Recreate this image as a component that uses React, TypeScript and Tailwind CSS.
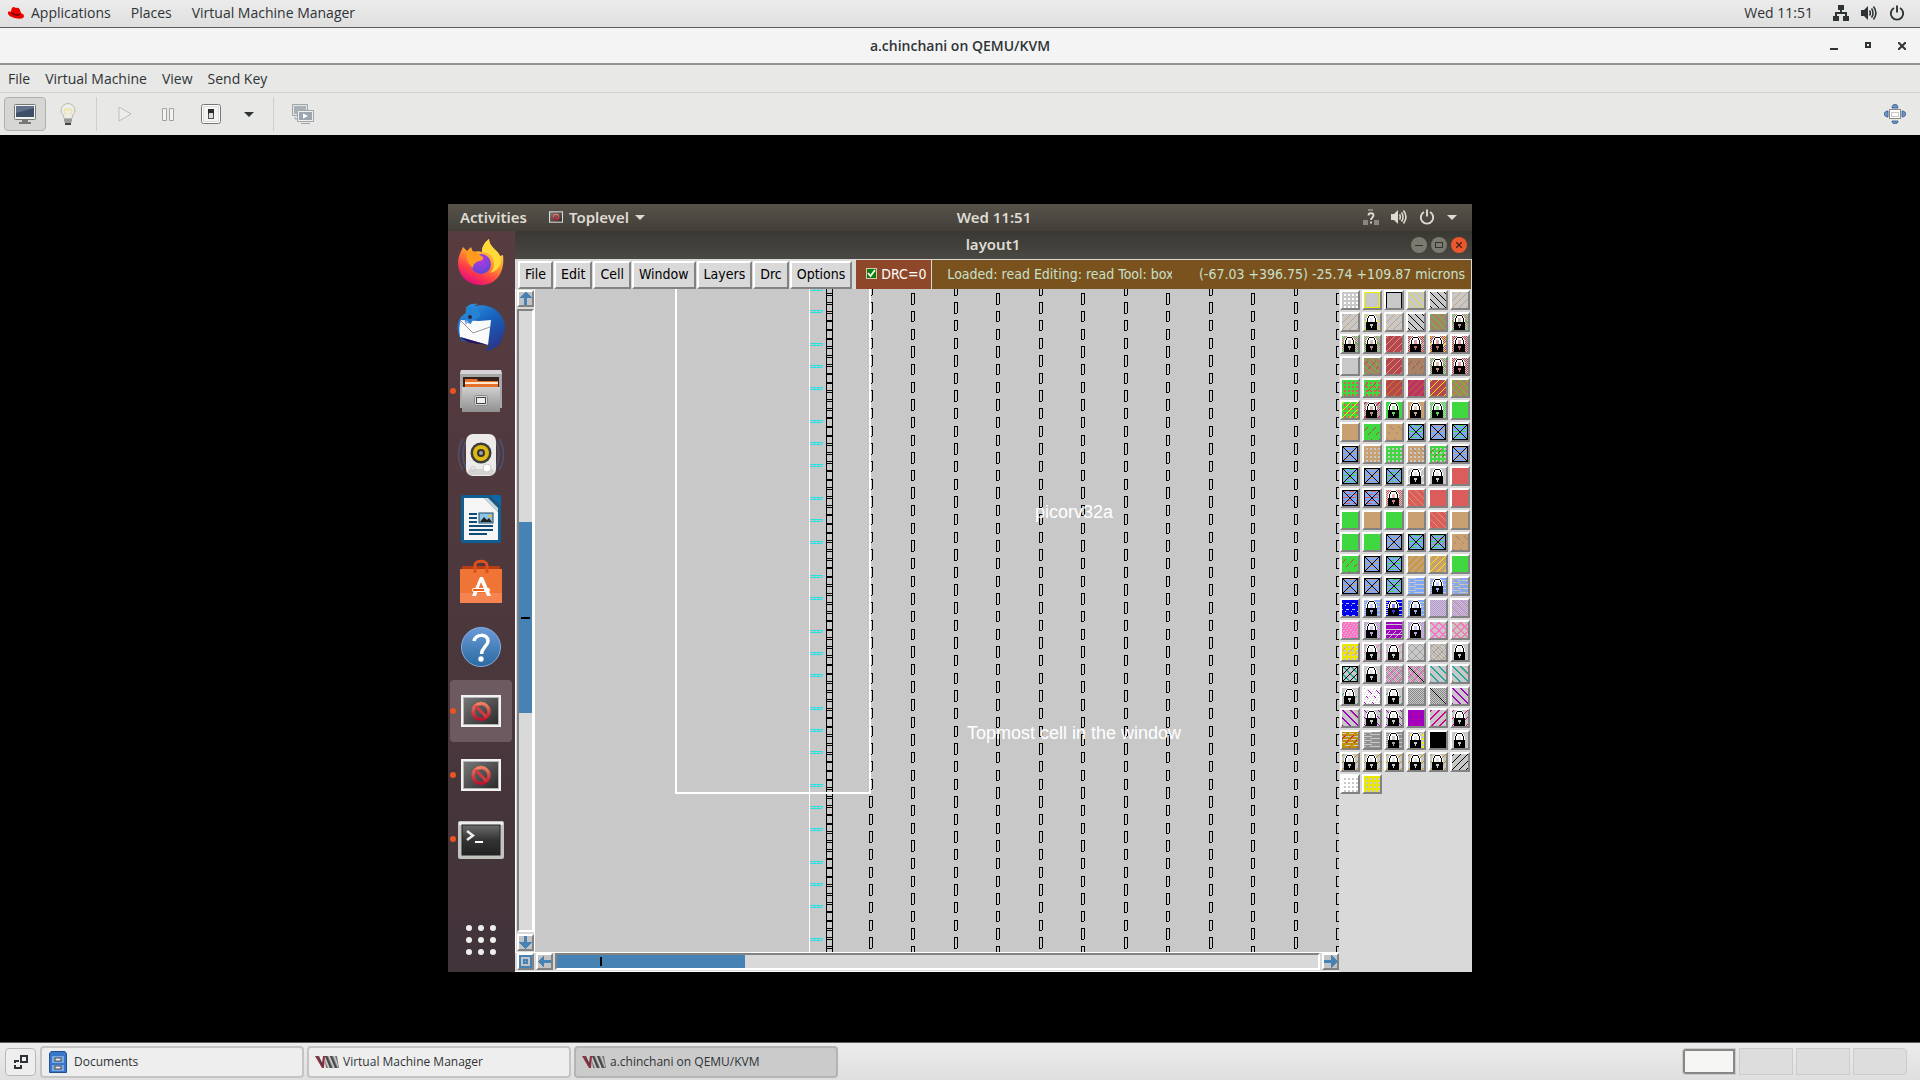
import React from "react";

const GRAY = "#c8c8c8";
const TAN = "#c8a072";
const GREEN = "#40d840";
const BROWN = "#a88264";
const RED = "#b84650";
const CORAL = "#dc5c5c";
const SKY = "#80a8f8";
const YEL = "#f0f000";
const PURPLE = "#a000c0";
const MAG = "#d00090";
const PINK = "#ff70c8";
const TEAL = "#20a8a0";
const GOLD = "#c09000";

type Test = (x: number, y: number) => boolean;

const tests: Record<string, Test> = {
  fill: () => true,
  slash: (x, y) => (x + y) % 7 === 1,
  back: (x, y) => (x - y + 21) % 7 === 0,
  slashSparse: (x, y) => (x + y) % 8 === 6 && (Math.floor(x / 4) + Math.floor(y / 8)) % 2 === 0,
  backSparse: (x, y) => (x - y + 16) % 8 === 2 && (Math.floor(x / 4) + Math.floor(y / 8)) % 2 === 1,
  thickBack: (x, y) => (x - y + 16) % 8 < 2,
  thickSlash: (x, y) => (x + y) % 8 < 2,
  dots: (x, y) => x % 4 > 1 && y % 4 > 1,
  check: (x, y) => (x + y) % 2 === 0,
  wave: (x, y) => (y + (x > 7 ? 2 : 0)) % 4 !== 0 && !(y % 4 === 2 && x % 6 < 2),
  bits: (x, y) => y % 3 === 1 && (x + y) % 8 < 5,
  purpleBits: (x, y) => y % 5 !== 2 && !(y > 8 && (x + y) % 6 === 0),
  triangles: (x, y) => !((x + 2) % 6 < 3 && y % 6 === 3) && !(x % 6 === 3 && y % 6 === 5),
  specks: (x, y) => (x * 5 + y * 3) % 16 < 3,
  magSpecks: (x, y) => x % 6 > 3 && y % 5 > 2,
  lattice: (x, y) => (x + y) % 8 < 2 || (x - y + 16) % 8 < 2,
  thin: (x, y) => (x + y) % 8 === 3 || (x - y + 16) % 8 === 4,
  open: (x, y) => x === 0 || x === 15 || y === 0,
  frame: (x, y) => x === 0 || x === 15 || y === 0 || y === 15,
  cross: (x, y) => x === 0 || x === 15 || y === 0 || y === 15 || x === y || x + y === 15,
  diagonal: (x, y) => x === y,
};

function pixels(test: Test) {
  let d = "";
  for (let y = 0; y < 16; y++) for (let x = 0; x < 16; x++) if (test(x, y)) d += `M${x} ${y}h1v1h-1z`;
  return d;
}

const paths: Record<string, string> = Object.fromEntries(Object.entries(tests).map(([k, t]) => [k, pixels(t)]));

type Layer = [string, string];
type Tile = { layers: Layer[]; lock?: boolean };

const t = (...layers: Layer[]): Tile => ({ layers });
const lock = (...layers: Layer[]): Tile => ({ layers, lock: true });
const solid = (c: string) => t(["fill", c]);
const box = (c: string, ...more: Layer[]) => t(["fill", SKY], ["bits", c], ...more, ["cross", "#000"]);

const tiles: Tile[] = [
  t(["dots", "#fff"]), t(["frame", YEL]), t(["open", "#000"]), t(["back", "#e0e020"]), t(["back", "#000"]), t(["slash", TAN]),
  t(["slash", TAN]), lock(["back", YEL]), t(["slash", TAN]), t(["back", "#000"]), t(["fill", BROWN], ["back", GREEN]), lock(["check", BROWN], ["back", GREEN]),
  lock(["check", BROWN], ["back", GREEN]), lock(["check", BROWN], ["back", GREEN]), t(["fill", RED], ["slash", TAN]), lock(["check", RED], ["slash", TAN]), lock(["check", RED], ["slash", YEL]), lock(["check", RED]),
  t(), t(["fill", BROWN], ["back", GREEN], ["slashSparse", RED]), t(["fill", RED], ["slash", TAN]), t(["fill", BROWN], ["slashSparse", RED]), lock(["check", BROWN], ["back", GREEN]), lock(["check", RED]),
  t(["fill", GREEN], ["dots", CORAL]), t(["fill", GREEN], ["dots", CORAL], ["slashSparse", RED]), t(["fill", RED], ["slash", GOLD]), t(["fill", RED], ["slash", MAG]), t(["fill", RED], ["slash", YEL]), t(["fill", BROWN], ["slash", GOLD], ["back", GREEN]),
  t(["fill", GREEN], ["dots", CORAL], ["slash", YEL]), lock(["check", BROWN], ["slash", MAG]), lock(["fill", GREEN]), lock(["fill", TAN]), lock(["check", GREEN]), solid(GREEN),
  solid(TAN), t(["fill", GREEN], ["slashSparse", RED]), t(["fill", TAN], ["backSparse", BROWN]), box(GREEN), box(TAN), box(GREEN),
  box(TAN), t(["fill", TAN], ["dots", GRAY]), t(["fill", GREEN], ["dots", GRAY]), t(["fill", TAN], ["dots", GRAY], ["backSparse", BROWN]), t(["fill", GREEN], ["dots", GRAY], ["slashSparse", RED]), box(TAN),
  box(GREEN), box(TAN), box(GREEN, ["specks", "#9090d0"]), lock(["slash", "#fff"]), lock(), solid(CORAL),
  box(CORAL), box(CORAL), lock(["check", CORAL]), t(["fill", CORAL], ["back", TAN]), solid(CORAL), solid(CORAL),
  solid(GREEN), solid(TAN), solid(GREEN), solid(TAN), t(["fill", CORAL], ["back", TAN]), solid(TAN),
  solid(GREEN), solid(GREEN), box(TAN), box(GREEN), box(GREEN, ["slashSparse", CORAL]), t(["fill", TAN], ["backSparse", BROWN]),
  t(["fill", GREEN], ["slashSparse", RED]), box(TAN), box(GREEN), t(["fill", TAN], ["slash", GOLD]), t(["fill", TAN], ["slash", YEL]), solid(GREEN),
  box(TAN), box(TAN), box(GREEN), t(["wave", SKY]), lock(["wave", SKY]), t(["wave", SKY], ["back", TAN]),
  t(["triangles", "#0000f0"]), lock(["wave", SKY]), lock(["wave", "#0000f0"]), lock(["wave", SKY]), t(["check", "#b890e0"]), t(["check", "#b890e0"], ["thickBack", "#c8a0b0"]),
  t(["fill", PINK], ["specks", GRAY]), lock(["check", "#b890e0"]), t(["purpleBits", PURPLE]), lock(["check", "#b890e0"]), t(["lattice", PINK]), t(["lattice", PINK], ["back", TAN]),
  t(["fill", "#e8e800"], ["dots", GRAY], ["slashSparse", PINK]), lock(["slash", PINK]), lock(["slash", PINK]), t(["thin", "#a0a0a0"]), t(["thin", "#a0a0a0"], ["back", TAN]), lock(),
  t(["thickBack", TEAL], ["slash", "#000"], ["frame", "#000"]), lock(), t(["check", "#909090"], ["thin", PINK]), t(["check", "#909090"], ["thin", PINK], ["diagonal", "#000"]), t(["thickBack", TEAL]), t(["back", TAN], ["thickBack", TEAL]),
  lock(["slashSparse", TEAL]), t(["fill", "#fff"], ["specks", GRAY], ["backSparse", PURPLE]), lock(["slashSparse", TEAL]), t(["check", "#888"]), t(["check", "#888"], ["diagonal", "#000"]), t(["thickBack", PURPLE]),
  t(["back", TAN], ["thickBack", PURPLE]), lock(["back", PURPLE]), lock(["back", PURPLE]), t(["fill", PURPLE], ["magSpecks", MAG]), t(["thickSlash", MAG]), lock(["slash", MAG]),
  t(["fill", GOLD], ["bits", GRAY], ["slashSparse", MAG]), t(["wave", "#909090"]), lock(["wave", "#909090"]), lock(["dots", YEL]), solid("#000"), lock(),
  lock(["slash", GOLD]), lock(["slash", GOLD]), lock(["slash", GOLD]), lock(["slash", GOLD]), lock(["slash", GOLD]), t(["slash", "#000"]),
  t(["fill", "#fff"], ["dots", GRAY]), t(["fill", "#e8e800"], ["dots", GRAY]),
];

function LayerTile({ tile, index }: { tile: Tile; index: number }) {
  const base = tile.layers[0];
  const hole = base && ["fill", "check", "wave"].includes(base[0]) ? base[1] : GRAY;
  return (
    <button
      aria-label={`Layer ${index + 1}`}
      className="size-5 border-2 border-t-white border-l-white border-r-[#828282] border-b-[#828282] bg-[#c8c8c8]"
    >
      <svg viewBox="0 0 16 16" className="block size-4" shapeRendering="crispEdges">
        {tile.layers.map(([k, c], i) => (
          <path key={i} d={k === "fill" ? "M0 0h16v16H0z" : paths[k]} fill={c} />
        ))}
        {tile.lock && (
          <>
            <path fill="#fff" d="M5 0h5v1h1v1h1v2h1v5H2V4h1V2h1V1h1z" />
            <path fill={hole} opacity=".5" d="M6 4h3v4H6z" />
            <path fill="#000" d="M5 1h5v1h1v2h1v5h-1V4h-1V2H5v2H4v5H3V4h1V2h1z" />
            <path fill="#000" d="M2 8h11v8H2z" />
            <path fill={GRAY} d="M6 10h3v2H8v2H7v-2H6z" />
            <path fill={hole} opacity=".7" d="M6 10h3v2H8v2H7v-2H6z" />
          </>
        )}
      </svg>
    </button>
  );
}

const columns = [869, 911, 954, 996, 1039, 1081, 1124, 1166, 1209, 1251, 1294, 1336].map((x) => x - 535);
const PITCH = 8.82;

function cellTop(k: number) {
  return Math.round(4.4 + PITCH * k);
}
function cellBottom(k: number) {
  return Math.round(14.8 + PITCH * k);
}

function cellColumn(x: number, phase: number) {
  let d = "";
  for (let k = phase - 2; k < 160; k += 2) {
    const top = cellTop(k);
    d += `M${x} ${top}h4v${cellBottom(k) - top}h-1v1h-3zM${x + 1} ${top + 1}v${cellBottom(k) - top - 1}h2v-${cellBottom(k) - top - 1}z`;
  }
  return d;
}

function ladder(x: number) {
  let d = `M${x} 0h1v2000h-1zM${x + 6} 0h1v2000h-1z`;
  for (let k = -1; k < 160; k++) d += `M${x} ${cellTop(k)}h7v1h-7zM${x} ${cellBottom(k)}h7v1h-7z`;
  return d;
}

const pinRows = [-1, 21, 54, 76, 98, 131, 153, 175, 208, 230, 252, 286, 308, 341, 363, 385, 418, 440, 462, 495, 517, 539, 572, 594, 616, 649];

function LayoutCanvas() {
  return (
    <svg className="absolute inset-0 block size-full" shapeRendering="crispEdges" role="img" aria-label="Cell layout">
      <path d={ladder(291)} fill="#000" />
      {columns.map((x, i) => (
        <path key={x} d={cellColumn(x, i % 2 ? 0 : 1)} fill="#000" fillRule="evenodd" />
      ))}
      {pinRows.map((y) => (
        <path key={y} d={`M275 ${y}h13v2h-1v-1h-12zM275 ${y + 2}h12v1h-12zM279 ${y + 1}h1v1h-1zM283 ${y + 1}h1v1h-1z`} fill="#28e0e0" />
      ))}
      <path d="M274 0h1v2000h-1zM140 0h2v503h192V0h2v505H140z" fill="#fff" />
      <g fill="#fff" fontFamily="Liberation Sans, sans-serif" fontSize="18" textAnchor="middle" shapeRendering="auto">
        <text x="539" y="229">picorv32a</text>
        <text x="539" y="450">Topmost cell in the window</text>
      </g>
    </svg>
  );
}

const arrowPaths = {
  up: "M6 0h1l6 6H8v7H5V6H0z",
  down: "M5 0h3v6h5l-6 7H6L0 6h5z",
  left: "M0 6l6-6v5h7v3H6v5L0 7z",
  right: "M13 6L7 0v5H0v3h7v5l6-6z",
  full: "M0 0h13v13H0zM2 2v9h9V2zM4 4h5v5H4zM6 6v1h1V6z",
};

function ScrollButton({ kind }: { kind: keyof typeof arrowPaths }) {
  return (
    <button
      aria-label={`Scroll ${kind}`}
      className="flex size-[17px] shrink-0 items-center justify-center border-2 border-t-white border-l-white border-r-[#828282] border-b-[#828282] bg-[#c3c3c3]"
    >
      <svg viewBox="0 0 13 13" className="size-[13px] shrink-0" shapeRendering="crispEdges">
        <path d={arrowPaths[kind]} fill="#4682b4" fillRule="evenodd" />
      </svg>
    </button>
  );
}

function BlockedWindow({ className }: { className: string }) {
  return (
    <svg viewBox="0 0 40 32" className={className}>
      <defs>
        <linearGradient id="bw" x1="0" y1="0" x2="1" y2="1">
          <stop stopColor="#777" />
          <stop offset="1" stopColor="#2b2b2b" />
        </linearGradient>
        <linearGradient id="br" x1="0" y1="0" x2="0" y2="1">
          <stop stopColor="#f08060" />
          <stop offset="1" stopColor="#c01030" />
        </linearGradient>
      </defs>
      <rect width="40" height="32" fill="#f2f2f0" />
      <rect x="2" y="2" width="36" height="28" fill="#b5b5b5" />
      <rect x="3" y="3" width="34" height="26" fill="url(#bw)" />
      <circle cx="20" cy="16.500" r="8" fill="none" stroke="url(#br)" strokeWidth="3.400" />
      <path d="M14.500 11l11 11" stroke="#d63a40" strokeWidth="3" />
    </svg>
  );
}

const dockIcons: { name: string; running?: boolean; active?: boolean; art: React.ReactNode }[] = [
  {
    name: "Firefox",
    art: (
      <svg viewBox="0 0 48 48" className="size-12">
        <defs>
          <linearGradient id="ffa" x1=".8" y1="0" x2=".3" y2="1">
            <stop stopColor="#fff44f" />
            <stop offset=".45" stopColor="#ff9a2a" />
            <stop offset=".75" stopColor="#ff3a4a" />
            <stop offset="1" stopColor="#e00a80" />
          </linearGradient>
          <radialGradient id="ffb" cx=".5" cy=".3" r=".7">
            <stop stopColor="#b838e0" />
            <stop offset="1" stopColor="#5a48d8" />
          </radialGradient>
        </defs>
        <path d="M6 8l4 4 4-4 2 5c3-1 7-1 9 0 0-6 3-10 7-13 0 8 8 10 11 17l3-1c2 15-5 30-22 30C9 46 1 35 1 24c0-5 2-10 5-16z" fill="url(#ffa)" />
        <circle cx="24" cy="25" r="10" fill="url(#ffb)" />
        <path d="M10 12c7-1 10 2 16 6 1 2-1 4-4 4-3 1-6 3-6 7-5-4-8-10-6-17z" fill="#ff9a20" />
        <path d="M25 13c7 0 12 4 12 12 0 4-2 7-4 9 8-2 13-9 10-17-3-7-11-9-11-17-5 4-7 8-7 13z" fill="#ffd83a" />
      </svg>
    ),
  },
  {
    name: "Thunderbird",
    art: (
      <svg viewBox="0 0 48 48" className="size-12">
        <defs>
          <linearGradient id="tb" x1="0" y1="0" x2=".6" y2="1">
            <stop stopColor="#35a0e8" />
            <stop offset=".5" stopColor="#1765c0" />
            <stop offset="1" stopColor="#283a90" />
          </linearGradient>
        </defs>
        <path d="M9 5c2-4 8-5 12-4-2 1-3 1-4 2C34-1 46 10 48 22c0 6-1 10-3 12 0 5-4 10-8 11-3 2-7 3-10 3 3-2 5-4 5-6L5 38C-2 29-1 15 9 10z" fill="url(#tb)" />
        <path d="M4 17l18 1 12-1-3 25L3 34C2 28 2 22 4 17z" fill="#fafafa" />
        <path d="M4 18l12 12 17-6" fill="none" stroke="#999" />
        <path d="M3 34l28 8-8-1c-6 0-14-2-20-7z" fill="#2a1458" />
        <path d="M9 5c7-3 14 2 14 8-4 4-8 3-9 8l-6-2z" fill="#2583d4" />
        <circle cx="13" cy="14" r="2" fill="#332048" />
        <path d="M9 17l-1 5 4-3z" fill="#9ad" />
      </svg>
    ),
  },
  {
    name: "Files",
    running: true,
    art: (
      <svg viewBox="0 0 48 48" className="size-12">
        <defs>
          <linearGradient id="fi" x1="0" y1="0" x2="0" y2="1">
            <stop stopColor="#cfcfcf" />
            <stop offset="1" stopColor="#909090" />
          </linearGradient>
        </defs>
        <path d="M4 3h40l1 5v33H3V8z" fill="#a8a8a8" />
        <path d="M4 3h40l1 4H3z" fill="#d5d3d5" />
        <rect x="6" y="10" width="36" height="11" fill="#33231e" />
        <path d="M8 12h12l1 2h20v6H8z" fill="#e8702a" />
        <path d="M8 15h33v2H8z" fill="#fbe9d2" />
        <rect x="5" y="20" width="38" height="25" fill="url(#fi)" />
        <rect x="17.500" y="28.500" width="13" height="10" rx="2" fill="#ddd" stroke="#888" />
        <rect x="19.500" y="30.500" width="9" height="6" fill="#eee" stroke="#444" />
      </svg>
    ),
  },
  {
    name: "Rhythmbox",
    art: (
      <svg viewBox="0 0 48 48" className="size-12">
        <path d="M6 8c-6 9-6 22 0 31M42 8c6 9 6 22 0 31M9 10c-4 8-4 19 0 27M39 10c4 8 4 19 0 27" fill="none" stroke="#4c5c88" strokeWidth="1.500" opacity=".7" />
        <rect x="9" y="3" width="30" height="42" rx="7" fill="#ecebea" />
        <rect x="11" y="38" width="26" height="6" rx="3" fill="#d4d3d0" />
        <circle cx="24" cy="22" r="10.500" fill="#3c3c3c" />
        <circle cx="24" cy="22" r="8" fill="#dfb90f" />
        <circle cx="24" cy="22" r="4" fill="#333" />
        <circle cx="24" cy="22" r="2" fill="#9a9fa8" />
        <circle cx="16" cy="38" r="2.500" fill="none" stroke="#ccc" />
        <circle cx="30" cy="37" r="4" fill="#fff" stroke="#ccc" />
      </svg>
    ),
  },
  {
    name: "LibreOffice Writer",
    art: (
      <svg viewBox="0 0 48 48" className="size-12">
        <path d="M6 0h25l13 13v33a2 2 0 0 1-2 2H6a2 2 0 0 1-2-2V2a2 2 0 0 1 2-2z" fill="#0f5f92" />
        <path d="M32 0h10a2 2 0 0 1 2 2v10z" fill="#0a68a8" />
        <path d="M7 3h20l14 14v28H7z" fill="#f5f5f5" />
        <path d="M27 3l14 14v-4L31 3z" fill="#cfd6da" />
        <path d="M12 19h8M12 23h8M12 27h8M12 31h24M12 35h24M12 39h18" stroke="#0f4c75" strokeWidth="2" />
        <rect x="22" y="18" width="14" height="10" fill="#8cc5e8" stroke="#174a68" />
        <path d="M23 27l4-5 3 3 2-2 3 4z" fill="#222" />
        <circle cx="33" cy="21" r="1.500" fill="#f0c020" />
      </svg>
    ),
  },
  {
    name: "Ubuntu Software",
    art: (
      <svg viewBox="0 0 48 48" className="size-12">
        <path d="M5 7h38v5H5z" fill="#b83c14" />
        <path d="M3 10h42v34H3z" fill="#f07436" />
        <path d="M3 34h42v10H3z" fill="#f58450" />
        <path d="M18 14V6c0-5 12-5 12 0v8" fill="none" stroke="#e0501c" strokeWidth="3" />
        <path d="M15 37l8-19h3l8 19h-4l-6-14-5 14z" fill="#fff" />
        <rect x="15" y="29" width="18" height="4" rx="2" fill="#fff" />
        <path d="M16 31h11" stroke="#e8601c" strokeWidth="2" />
      </svg>
    ),
  },
  {
    name: "Help",
    art: (
      <svg viewBox="0 0 48 48" className="size-12">
        <defs>
          <linearGradient id="he" x1="0" y1="0" x2="0" y2="1">
            <stop stopColor="#6a9ad8" />
            <stop offset="1" stopColor="#2a6aa0" />
          </linearGradient>
        </defs>
        <circle cx="24" cy="24" r="19.500" fill="url(#he)" stroke="#86aede" />
        <path d="M17 18c1-7 14-8 14 0 0 5-6 6-6.500 13" fill="none" stroke="#fff" strokeWidth="3.500" />
        <circle cx="24" cy="36" r="2.700" fill="#fff" />
      </svg>
    ),
  },
  { name: "Toplevel", running: true, active: true, art: <BlockedWindow className="h-8 w-10" /> },
  { name: "Wish", running: true, art: <BlockedWindow className="h-8 w-10" /> },
  {
    name: "Terminal",
    running: true,
    art: (
      <svg viewBox="0 0 48 40" className="h-10 w-12">
        <defs>
          <linearGradient id="te" x1="0" y1="0" x2="0" y2="1">
            <stop stopColor="#6c6c6c" />
            <stop offset=".5" stopColor="#333" />
            <stop offset="1" stopColor="#222" />
          </linearGradient>
        </defs>
        <rect x="1" y="2" width="46" height="38" rx="2" fill="#c2c4c0" />
        <rect x="2" y="3" width="44" height="3" fill="#eee" />
        <rect x="5" y="6" width="38" height="30" fill="url(#te)" stroke="#222" />
        <path d="M10 12l6 4.500-6 4.500" fill="none" stroke="#eee" strokeWidth="2.400" />
        <path d="M18 23h8" stroke="#fff" strokeWidth="2" />
      </svg>
    ),
  },
];

function Dock() {
  return (
    <nav aria-label="Dock" className="flex w-[67px] shrink-0 flex-col bg-linear-to-b from-[#573c40] to-[#41343a] pt-px">
      <ul className="flex flex-col gap-0.5 pl-0.5">
        {dockIcons.map((d) => (
          <li key={d.name}>
            <button
              aria-label={d.name}
              className={`relative flex size-[62px] items-center justify-center rounded ${d.active ? "bg-[#6c5a60]" : ""}`}
            >
              {d.running && <span className="absolute top-7 left-0 size-1.5 rounded-full bg-[#e95420]" />}
              {d.art}
            </button>
          </li>
        ))}
      </ul>
      <button aria-label="Show Applications" className="mt-auto mb-[17px] grid grid-cols-[repeat(3,6px)] justify-center gap-1.5 pr-0.5">
        {Array.from({ length: 9 }, (_, i) => (
          <span key={i} className="size-1.5 rounded-full bg-[#eee]" />
        ))}
      </button>
    </nav>
  );
}

function Speaker({ className }: { className: string }) {
  return (
    <svg viewBox="0 0 16 16" className={className} fill="none" stroke="currentColor" strokeWidth="1.600">
      <path d="M0 5h3l4-4v14l-4-4H0z" fill="currentColor" stroke="none" />
      <path d="M8.500 5.500c1 1.500 1 3.500 0 5M10.500 3.500c2 2.500 2 6.500 0 9M12.500 1.500c3 4 3 9 0 13" />
    </svg>
  );
}

function Power({ className }: { className: string }) {
  return (
    <svg viewBox="0 0 16 16" className={className} fill="none" stroke="currentColor" strokeWidth="1.900">
      <path d="M5 3a6.200 6.200 0 1 0 6 0M8 .5v7" />
    </svg>
  );
}

function GuestDesktop() {
  return (
    <section aria-label="Guest display" className="flex w-8/15 flex-col bg-[#d9d9d9]">
      <div className="grid h-[27px] shrink-0 grid-cols-3 items-center bg-linear-to-b from-[#57534a] to-[#423f3a] pb-px font-['Noto_Sans',sans-serif] text-[15px] leading-5 font-semibold text-[#dfdbd2]">
        <div className="flex items-center gap-[22px] pl-3">
          <button>Activities</button>
          <button className="flex items-center gap-1.5">
            <BlockedWindow className="h-3 w-3.5" />
            Toplevel
            <svg viewBox="0 0 10 5" className="w-2.5"><path d="M0 0h10L5 5z" fill="currentColor" /></svg>
          </button>
        </div>
        <time className="pl-[68px] text-center">Wed 11:51</time>
        <div className="flex items-center justify-end gap-3 pr-[15px]">
          <svg viewBox="0 0 16 16" className="size-4">
            <path d="M0 11h5v5H0zM11 11h5v5h-5zM5 0h5v2H5z" fill="#8a8680" />
            <path d="M5.500 6.500c0-3 5-3 5 0 0 2-2.500 2-2.500 4.500M8 12.500v2" fill="none" stroke="#dfdbd2" strokeWidth="1.800" />
          </svg>
          <Speaker className="size-4" />
          <Power className="size-4" />
          <svg viewBox="0 0 10 5" className="w-2.5"><path d="M0 0h10L5 5z" fill="currentColor" /></svg>
        </div>
      </div>
      <div className="flex min-h-0 flex-1">
        <Dock />
        <div className="flex min-w-0 flex-1 flex-col">
          <header className="flex h-7 shrink-0 items-center bg-linear-to-b from-[#3a3833] to-[#4a4842] pr-[5px] font-['Noto_Sans',sans-serif] text-[15px] leading-5 font-semibold text-[#dfdbd2]">
            <h2 className="flex-1 pb-0.5 pl-[60px] text-center">layout1</h2>
            <div className="flex gap-1">
              <button aria-label="Minimize" className="flex size-4 items-center justify-center rounded-full bg-[#7c7970]">
                <span className="h-px w-2 bg-[#35332f]" />
              </button>
              <button aria-label="Maximize" className="flex size-4 items-center justify-center rounded-full bg-[#7c7970]">
                <span className="h-1.5 w-2 border border-[#35332f]" />
              </button>
              <button aria-label="Close" className="flex size-4 items-center justify-center rounded-full bg-[#e9582c]">
                <svg viewBox="0 0 6 6" className="size-1.5"><path d="M0 0l6 6M6 0L0 6" stroke="#4a2012" strokeWidth="1.300" /></svg>
              </button>
            </div>
          </header>
          <div className="flex h-[30px] shrink-0 pt-px pr-px font-['DejaVu_Sans_Condensed','DejaVu_Sans',sans-serif] text-sm whitespace-nowrap">
            <div className="flex gap-px pt-px pr-1 pl-[3px] text-black">
              {["File", "Edit", "Cell", "Window", "Layers", "Drc", "Options"].map((m) => (
                <button key={m} className="border-2 border-t-white border-r-[#828282] border-b-[#828282] border-l-white px-[5px] pb-0.5">
                  {m}
                </button>
              ))}
            </div>
            <label className="mr-px flex w-[75px] items-center gap-1 bg-[#8e4728] pb-0.5 pl-2.5 text-white">
              <input
                type="checkbox"
                defaultChecked
                className="size-[11px] shrink-0 appearance-none border border-[#d9c8b8] bg-[#0a800a] bg-[url('data:image/svg+xml,%3Csvg%20xmlns=%22http://www.w3.org/2000/svg%22%20viewBox=%220%200%209%209%22%3E%3Cpath%20d=%22M1%204l2.500%203L8%201%22%20fill=%22none%22%20stroke=%22white%22%20stroke-width=%221.800%22/%3E%3C/svg%3E')]"
              />
              DRC=0
            </label>
            <div className="flex min-w-0 flex-1 items-center bg-[#7a521e] pb-0.5 pl-[15px] text-[#c8e0cc]">
              <span className="w-[225px] overflow-hidden">Loaded: read Editing: read Tool: box</span>
              <span className="ml-auto pr-1.5">(-67.03 +396.75) -25.74 +109.87 microns</span>
            </div>
          </div>
          <div className="flex min-h-0 flex-1">
            <div className="flex min-w-0 flex-1 flex-col">
              <div className="flex min-h-0 flex-1">
                <div className="flex w-5 shrink-0 flex-col items-center gap-0.5 border-x border-white pt-px pb-px">
                  <ScrollButton kind="up" />
                  <div className="flex w-[17px] flex-1 flex-col border-2 border-t-[#828282] border-r-white border-b-white border-l-[#828282]">
                    <span className="grow-212" />
                    <span className="flex grow-191 basis-0 items-center justify-center bg-[#4682b4]">
                      <span className="h-0.5 w-[9px] bg-black" />
                    </span>
                    <span className="grow-218" />
                  </div>
                  <ScrollButton kind="down" />
                </div>
                <div className="relative min-w-0 flex-1 overflow-hidden bg-[#c8c8c8]">
                  <LayoutCanvas />
                </div>
              </div>
              <div className="flex h-5 shrink-0 items-start gap-0.5 border-y border-white pl-0.5">
                <ScrollButton kind="full" />
                <ScrollButton kind="left" />
                <div className="flex h-[17px] flex-1 border-2 border-t-[#828282] border-r-white border-b-white border-l-[#828282]">
                  <span className="flex grow-188 basis-0 items-center bg-[#4682b4]">
                    <span className="ml-[43px] h-[9px] w-0.5 bg-black" />
                  </span>
                  <span className="grow-574 basis-0" />
                </div>
                <ScrollButton kind="right" />
              </div>
            </div>
            <div className="w-[133px] shrink-0 pt-px pl-px">
              <div className="grid grid-cols-[repeat(6,20px)] gap-0.5">
                {tiles.map((tile, i) => (
                  <LayerTile key={i} tile={tile} index={i} />
                ))}
              </div>
            </div>
          </div>
        </div>
      </div>
    </section>
  );
}

function VmIcon() {
  return (
    <svg viewBox="0 0 24 14" className="h-3.5 w-6 shrink-0">
      <path d="M9 1h13l2 12H11z" fill="#777" />
      <path d="M8 1h2l5 12h-2zM13 1h2l5 12h-2zM18 1h2l3 9v3z" fill="#c8c8c8" />
      <path d="M10 1h2l5 12h-2zM15 1h2l5 12h-2z" fill="#484848" />
      <path d="M0 1h3l4 7 1-7h2l-1 12H7z" fill="#8e2f40" />
      <path d="M3 1h1l4 9-1 1z" fill="#444" />
    </svg>
  );
}

const taskStyle = "flex h-8 w-[264px] items-center rounded-sm border-2 px-1.5 text-left text-xs";

export default function App() {
  return (
    <div className="flex min-h-screen flex-col bg-black font-['Open_Sans',sans-serif] text-sm text-[#2e3436]">
      <div className="flex h-7 shrink-0 items-center border-b border-[#5c5c5c] bg-linear-to-b from-[#ececec] to-[#dfdfdf] pr-[15px] pb-0.5 pl-2">
        <svg viewBox="0 0 16 12" className="mr-[7px] h-3 w-4">
          <path d="M3 5c0-3 1-5 3-5l2 1c2-1 4 0 5 5 2 1 3 2 3 3 0 4-8 3-12 1C1 9-1 6 0 5c1-1 2-1 3 0z" fill="#e00" />
          <path d="M3 5c2 2 6 3 9 2v1c-4 1-8 0-9-3z" fill="#200" />
        </svg>
        <nav className="flex gap-5">
          <button>Applications</button>
          <button>Places</button>
          <button>Virtual Machine Manager</button>
        </nav>
        <time className="ml-auto">Wed 11:51</time>
        <div className="ml-5 flex gap-3">
          <svg viewBox="0 0 16 16" className="size-4" fill="currentColor">
            <path d="M5 0h6v5H9v2h5v4h2v5h-6v-5h2V9H4v2h2v5H0v-5h2V7h5V5H5z" />
          </svg>
          <Speaker className="size-4" />
          <Power className="size-4" />
        </div>
      </div>
      <header className="flex h-[37px] shrink-0 items-center border-b-2 border-[#94948f] bg-[#f4f4f4] pr-3.5">
        <h1 className="flex-1 pl-[90px] text-center font-semibold">a.chinchani on QEMU/KVM</h1>
        <div className="flex gap-[26px]">
          <button aria-label="Minimize" className="flex size-2 items-end"><span className="h-0.5 w-2 bg-[#2e3436]" /></button>
          <button aria-label="Maximize" className="mx-px size-1.5 border-2 border-[#2e3436]" />
          <button aria-label="Close">
            <svg viewBox="0 0 8 8" className="size-2"><path d="M0 0l8 8M8 0L0 8" stroke="#2e3436" strokeWidth="2" /></svg>
          </button>
        </div>
      </header>
      <nav className="flex h-7 shrink-0 items-center gap-[15px] border-b border-[#cfcfcc] bg-[#e8e8e6] pl-2">
        <button>File</button>
        <button>Virtual Machine</button>
        <button>View</button>
        <button>Send Key</button>
      </nav>
      <div className="flex h-[42px] shrink-0 items-center bg-[#e8e8e6] pr-3.5 pl-1">
        <button aria-label="Console" className="flex h-[34px] w-[42px] items-center justify-center rounded-sm border border-[#b0b0ac] bg-[#d6d6d4]">
          <svg viewBox="0 0 22 20" className="h-5 w-[22px]">
            <rect x=".5" y=".5" width="21" height="15" rx="1" fill="#f2f2f0" stroke="#777" />
            <rect x="2" y="2" width="18" height="11" fill="#3f4f68" />
            <path d="M2 9l18-5V2H2z" fill="#60708a" />
            <path d="M8 16h6v2h3v2H5v-2h3z" fill="#777" />
          </svg>
        </button>
        <button aria-label="Details" className="ml-3.5 flex w-4 justify-center">
          <svg viewBox="0 0 16 22" className="h-[22px] w-4">
            <path d="M8 .5a7 7 0 0 1 7 7c0 3-3 4-3 8H4c0-4-3-5-3-8a7 7 0 0 1 7-7z" fill="#eeeee8" stroke="#b8b8b0" />
            <path d="M5.500 12L4 7c2-2 6-2 8 0l-1.500 5M4 7h8" fill="none" stroke="#ece4a0" strokeWidth="1.200" />
            <path d="M4 15h8v4l-2 2H6l-2-2z" fill="#b8b8b4" />
            <path d="M4 17h8M5 19h6" stroke="#777" />
            <path d="M5 21h6" stroke="#444" strokeWidth="2" />
          </svg>
        </button>
        <span className="ml-5 h-[34px] w-px bg-[#cfcfcc]" />
        <button aria-label="Run" disabled className="ml-[21px]">
          <svg viewBox="0 0 14 16" className="h-4 w-3.5"><path d="M1 1l12 7-12 7z" fill="#eeeeec" stroke="#bdbdb9" /></svg>
        </button>
        <button aria-label="Pause" className="ml-[30px]">
          <svg viewBox="0 0 12 13" className="h-[13px] w-3" fill="#f4f4f2" stroke="#a2a29e"><path d="M.5 .5h4v12h-4zM7.500 .5h4v12h-4z" /></svg>
        </button>
        <button aria-label="Shut down" className="ml-[27px]">
          <svg viewBox="0 0 20 20" className="size-5">
            <rect x=".5" y=".5" width="19" height="19" rx="2" fill="#fff" stroke="#777" />
            <rect x="2.500" y="2.500" width="15" height="15" fill="#f4f4f2" stroke="#ddd" />
            <rect x="7" y="5" width="6" height="10" fill="#999" />
            <path d="M7 5h6v5H7z" fill="#2b2b2b" />
            <path d="M7 10h1v5H7zM12 10h1v5h-1zM7 14h6v1H7z" fill="#555" />
            <rect x="8" y="9" width="4" height="5" fill="#ddd" />
          </svg>
        </button>
        <button aria-label="Shut down options" className="ml-[23px]">
          <svg viewBox="0 0 10 5" className="w-2.5"><path d="M0 0h10L5 5z" fill="#2e3436" /></svg>
        </button>
        <span className="ml-[19px] h-[34px] w-px bg-[#cfcfcc]" />
        <button aria-label="Snapshots" className="ml-[18px]">
          <svg viewBox="0 0 22 22" className="size-[22px]">
            <path d="M.5 1.500h15v11H.5zM6 14v2H3v-2" fill="#e4e4e2" stroke="#a0a5a8" />
            <path d="M2 3h12v8H2z" fill="#a9b1b8" />
            <path d="M5.500 7.500h16v11h-16zM9 20.500h9" fill="#eee" stroke="#a0a5a8" />
            <path d="M7 9h13v8H7z" fill="#9ca6b0" />
            <path d="M11 10.500l5 2.500-5 2.500z" fill="#fff" />
          </svg>
        </button>
        <button aria-label="Fullscreen" className="ml-auto">
          <svg viewBox="0 0 22 20" className="h-5 w-[22px]">
            <path d="M8 4c0-5 6-5 6 0zM8 17c0 4 6 4 6 0zM4 7c-5 0-5 6 0 6zM18 7c5 0 5 6 0 6z" fill="#6f93c4" stroke="#2f5590" strokeWidth=".8" />
            <rect x="5.500" y="5.500" width="11" height="9" fill="#fff" stroke="#888a80" />
            <rect x="7.500" y="8.500" width="7" height="4" fill="#fff" stroke="#c8cac4" />
          </svg>
        </button>
      </div>
      <main className="flex flex-1 justify-center bg-black pt-[69px] pb-[70px]">
        <GuestDesktop />
      </main>
      <footer className="flex h-[38px] shrink-0 items-center gap-[3px] border-t border-[#5c5c5c] bg-linear-to-b from-[#ececec] to-[#dfdfdf] pr-[13px] pl-[5px]">
        <button aria-label="Show desktop" className="mr-px flex h-7 w-[31px] items-center justify-center rounded-sm border border-[#b8b8b8] bg-[#eee]">
          <svg viewBox="0 0 14 14" className="size-3.5" fill="none" stroke="#2e3436" strokeWidth="2">
            <path d="M7 1h6v6H7zM5 6H1M1 5v3M1 10v3h6v-3" />
          </svg>
        </button>
        <button className={`${taskStyle} gap-1.5 border-[#c4c4c4] bg-[#eeeeee]`}>
          <svg viewBox="0 0 20 22" className="h-[22px] w-5 shrink-0">
            <path d="M3 .5h14l1.500 2V21.500h-17V2.500z" fill="#3a76c8" stroke="#24508e" />
            <path d="M4 5h12v7H4zM4 14h12v6H4z" fill="#7aa8e4" />
            <rect x="7" y="7" width="6" height="3" fill="#eee" stroke="#444" />
            <rect x="7" y="15" width="6" height="3" fill="#eee" stroke="#444" />
          </svg>
          Documents
        </button>
        <button className={`${taskStyle} gap-1 border-[#c4c4c4] bg-[#eeeeee]`}>
          <VmIcon />
          Virtual Machine Manager
        </button>
        <button className={`${taskStyle} gap-1 border-[#b4b4b4] bg-[#cbcbcb]`}>
          <VmIcon />
          a.chinchani on QEMU/KVM
        </button>
        <div className="ml-auto flex gap-[3px]">
          <button aria-label="Workspace 1" className="h-[27px] w-[54px] rounded-l border border-[#cccccc] bg-[#878785] p-0.5">
            <span className="block size-full bg-[#f5f5f3]" />
          </button>
          <button aria-label="Workspace 2" className="h-[27px] w-[54px] border border-[#cccccc] bg-[#dddddd]" />
          <button aria-label="Workspace 3" className="h-[27px] w-[54px] border border-[#cccccc] bg-[#dddddd]" />
          <button aria-label="Workspace 4" className="h-[27px] w-[54px] rounded-r border border-[#cccccc] bg-[#dddddd]" />
        </div>
      </footer>
    </div>
  );
}
